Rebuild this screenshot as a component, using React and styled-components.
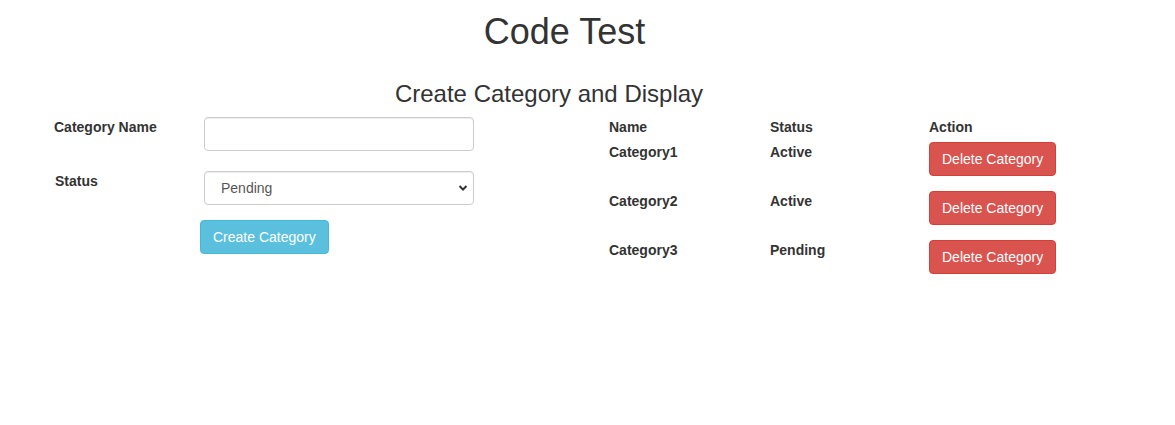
import React from 'react'
import styled, { createGlobalStyle } from 'styled-components';

const GlobalStyle = createGlobalStyle`
    body {
        margin: 0;
        background: #fff;
        color: #333;
        font-family: 'Liberation Sans', Arial, sans-serif;
        font-size: 14px;
        line-height: 20px;
    }
    * { box-sizing: border-box; }
`;

const Page = styled.div`
    width: 1175px;
    padding-top: 12px;
`;

const Title = styled.h1`
    margin: 0;
    font-size: 36px;
    font-weight: 500;
    line-height: 39px;
    text-align: center;
    padding-right: ${p => p.shift}px;
`;

const SubTitle = styled.h3`
    margin: 30px 0 0 0;
    font-size: 24px;
    font-weight: 500;
    line-height: 26px;
    text-align: center;
    padding-right: ${p => p.shift}px;
`;

const Content = styled.div`
    display: grid;
    grid-template-columns: 609px 1fr;
    margin-top: 10px;
`;

const FormArea = styled.div`
    padding-left: 54px;
`;

const FormRow = styled.div`
    display: grid;
    grid-template-columns: 150px 270px;
    align-items: start;
    margin-bottom: ${p => p.gap}px;
`;

const Label = styled.label`
    font-weight: 700;
    line-height: 20px;
    padding-left: ${p => p.nudge || 0}px;
`;

const Input = styled.input`
    display: block;
    width: 270px;
    height: 34px;
    padding: 6px 12px;
    font-family: inherit;
    font-size: 14px;
    color: #555;
    background: #fff;
    border: 1px solid #ccc;
    border-radius: 4px;
    box-shadow: inset 0 1px 1px rgba(0, 0, 0, .075);
    outline: none;
`;

const SelectWrap = styled.div`
    position: relative;
    width: 270px;
`;

const Select = styled.select`
    display: block;
    width: 270px;
    height: 34px;
    padding: 6px 12px 6px 16px;
    font-family: inherit;
    font-size: 14px;
    color: #555;
    background: #fff;
    border: 1px solid #ccc;
    border-radius: 4px;
    box-shadow: inset 0 1px 1px rgba(0, 0, 0, .075);
    appearance: none;
    -webkit-appearance: none;
    outline: none;
`;

const Chevron = styled.svg`
    position: absolute;
    right: 6px;
    top: 13px;
    pointer-events: none;
`;

const Button = styled.button`
    display: inline-block;
    height: 34px;
    padding: 6px 12px;
    font-family: inherit;
    font-size: 14px;
    line-height: 20px;
    color: #fff;
    background-color: ${p => p.variant === 'danger' ? '#d9534f' : '#5bc0de'};
    border: 1px solid ${p => p.variant === 'danger' ? '#d43f3a' : '#46b8da'};
    border-radius: 4px;
    white-space: nowrap;
    cursor: pointer;
`;

const ButtonRow = styled.div`
    padding-left: 146px;
`;

const Table = styled.div`
    display: flex;
    flex-direction: column;
`;

const HeaderRow = styled.div`
    display: grid;
    grid-template-columns: 161px 159px auto;
    font-weight: 700;
    line-height: 20px;
    margin-bottom: 5px;
`;

const Row = styled.div`
    display: grid;
    grid-template-columns: 161px 159px auto;
    align-items: start;
    font-weight: 700;
    line-height: 20px;
    margin-bottom: 15px;
`;

const Cell = styled.div`
    padding-top: 0;
`;

const categories = [
    { name: 'Category1', status: 'Active' },
    { name: 'Category2', status: 'Active' },
    { name: 'Category3', status: 'Pending' },
];

export default function App() {
    return (
        <>
            <GlobalStyle />
            <Page>
                <Title shift={46}>Code Test</Title>
                <SubTitle shift={77}>Create Category and Display</SubTitle>
                <Content>
                    <FormArea>
                        <FormRow gap={20}>
                            <Label>Category Name</Label>
                            <Input type="text" />
                        </FormRow>
                        <FormRow gap={15}>
                            <Label nudge={1}>Status</Label>
                            <SelectWrap>
                                <Select defaultValue="Pending">
                                    <option>Pending</option>
                                    <option>Active</option>
                                </Select>
                                <Chevron width="10" height="8" viewBox="0 0 10 8">
                                    <path d="M1.5 2 L5 5.5 L8.5 2" fill="none" stroke="#333" strokeWidth="2" />
                                </Chevron>
                            </SelectWrap>
                        </FormRow>
                        <ButtonRow>
                            <Button>Create Category</Button>
                        </ButtonRow>
                    </FormArea>
                    <Table>
                        <HeaderRow>
                            <Cell>Name</Cell>
                            <Cell>Status</Cell>
                            <Cell>Action</Cell>
                        </HeaderRow>
                        {categories.map(c => (
                            <Row key={c.name}>
                                <Cell>{c.name}</Cell>
                                <Cell>{c.status}</Cell>
                                <Cell><Button variant="danger">Delete Category</Button></Cell>
                            </Row>
                        ))}
                    </Table>
                </Content>
            </Page>
        </>
    );
}
